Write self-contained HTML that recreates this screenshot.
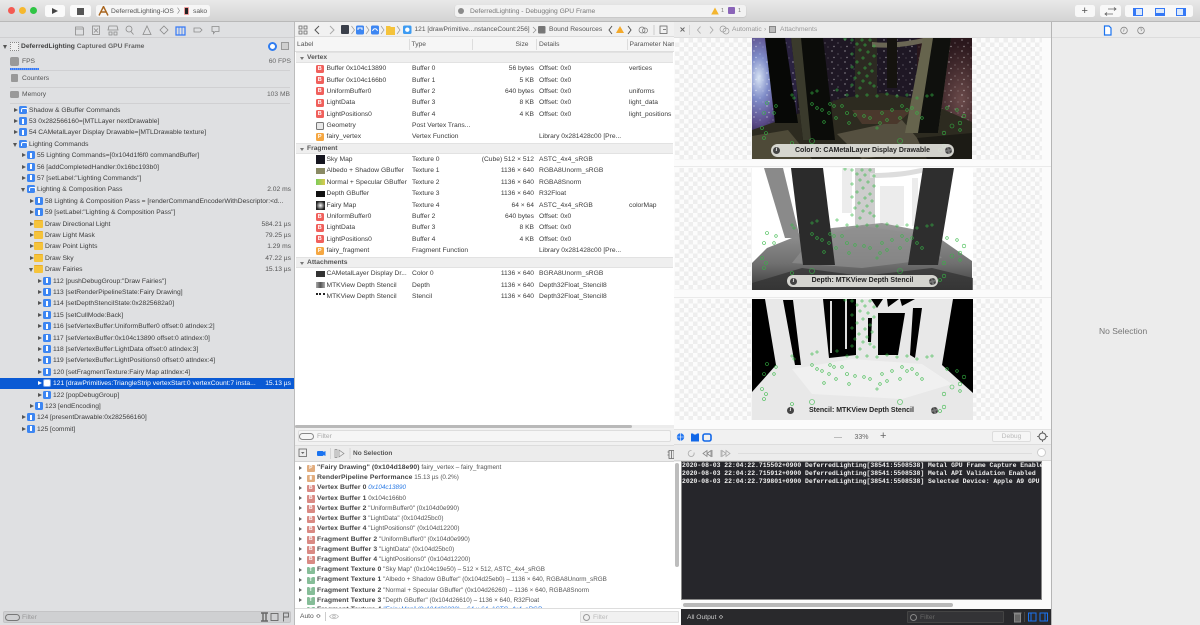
<!DOCTYPE html>
<html><head><meta charset="utf-8"><style>
*{box-sizing:border-box}
html,body{margin:0;padding:0;width:1200px;height:625px;overflow:hidden;background:#ececec}
#p{position:relative;width:1200px;height:625px;overflow:hidden;font:6.7px/11px "Liberation Sans",sans-serif;color:#3c3c3c;filter:blur(.35px)}
.x{position:absolute}
.t{position:absolute;white-space:nowrap;top:0}
.r{position:absolute;left:0;height:11px;width:294px}
.a{position:absolute;left:var(--x);top:3px;width:0;height:0;border-left:4px solid #555;border-top:2.5px solid transparent;border-bottom:2.5px solid transparent}
.a.o{border-top:4px solid #555;border-left:2.5px solid transparent;border-right:2.5px solid transparent;border-bottom:0;top:4px;left:calc(var(--x) - 1px)}
.ic{position:absolute;left:calc(var(--x) + 5px);top:1px;width:8px;height:8px;border-radius:1.5px;background:#3d86f2}
.ic:after{content:"";position:absolute;left:3.4px;top:1.5px;width:1.2px;height:5px;background:#fff}
.ic.p:after{left:1.5px;top:2px;width:5px;height:3px;border-radius:2px 2px 0 0;background:none;border:1px solid #fff;border-bottom:0}
.fo{position:absolute;left:calc(var(--x) + 4px);top:1px;width:9px;height:8px;background:#f5c33b;border-radius:1px;border-top:1.5px solid #e8ad2a}
.l{position:absolute;left:calc(var(--x) + 15px);top:0;white-space:nowrap}
.m{position:absolute;right:3px;top:0;white-space:nowrap;color:#555}
.sel{background:#0a5ad4;color:#fff}.sel .m{color:#fff}.sel .a{border-left-color:#fff}
.tr{position:absolute;left:296px;width:377px;height:11px}
.tr b{font-weight:normal;position:absolute;top:0;white-space:nowrap}
.c1{left:30.5px}.c2{left:116px}.c3{right:139px}.c4{left:243px}.c5{left:333px}
.bi{position:absolute;left:20px;top:1.5px;width:7.5px;height:8px;border-radius:1.5px;background:#f0605c;color:#fff;font:bold 5.5px/8px "Liberation Sans",sans-serif;text-align:center}
.bi.o{background:#f5a742}.bi.g{background:#e8e8e8;border:1px solid #777}
.th{position:absolute;left:20px;top:2.5px;width:9px;height:6px}
.sh{position:absolute;left:296px;width:377px;height:11px;background:#efefef;border-top:1px solid #e2e2e2;border-bottom:1px solid #e2e2e2;font-weight:bold;line-height:9.5px;color:#555}
.sh span{position:absolute;left:11px;top:0}
.sh i{position:absolute;left:4px;top:3.5px;border-top:3.5px solid #777;border-left:2.3px solid transparent;border-right:2.3px solid transparent}
.d{position:absolute;left:296px;height:10px;width:378px;line-height:10px;font-size:6.3px;color:#555;white-space:nowrap;margin-top:1px}
.d i{position:absolute;left:3px;top:2.5px;border-left:3.5px solid #666;border-top:2.3px solid transparent;border-bottom:2.3px solid transparent}
.d u{position:absolute;left:11px;top:1.5px;width:7.5px;height:7.5px;border-radius:1px;background:#d98a84;color:#fff;text-decoration:none;font:bold 5px/7.5px "Liberation Sans",sans-serif;text-align:center}
.d u.g{background:#86bd98}.d u.o{background:#e2ad7e}
.d span{position:absolute;left:21px;top:0}
.d b{font-size:6.8px;color:#444;letter-spacing:.1px}
.ck{position:absolute;left:675px;width:367px;background-color:#fcfcfc;background-image:conic-gradient(#eeeeee 25%,#fcfcfc 0 50%,#eeeeee 0 75%,#fcfcfc 0);background-size:9px 9px}
.pill{position:absolute;height:13px;border-radius:7px;background:rgba(226,226,220,.92);font:bold 7px/13px "Liberation Sans",sans-serif;color:#222;text-align:center;white-space:nowrap}
.pi{position:absolute;width:7px;height:7px;border-radius:50%;background:#444;color:#eee;font:italic bold 6px/7px "Liberation Serif",serif;text-align:center}
.pg{position:absolute;width:7px;height:7px;border-radius:50%;border:2px dotted #444;background:#777}
.con{position:absolute;left:682px;white-space:pre;font:bold 6.42px/8px "Liberation Mono",monospace;color:#eee}
svg{position:absolute;display:block;overflow:hidden}
</style></head><body><div id="p">

<!-- title bar -->
<div class="x" style="left:0;top:0;width:1200px;height:22px;background:linear-gradient(#e8e8e8,#d3d3d3);border-bottom:1px solid #b9b9b9"></div>
<div class="x" style="left:7.500px;top:7px;width:7px;height:7px;border-radius:50%;background:#f45a52"></div>
<div class="x" style="left:18.500px;top:7px;width:7px;height:7px;border-radius:50%;background:#f6b82e"></div>
<div class="x" style="left:30px;top:7px;width:7px;height:7px;border-radius:50%;background:#2fc544"></div>
<div class="x" style="left:45px;top:5px;width:20px;height:12px;border-radius:2.5px;background:#fafafa"></div>
<div class="x" style="left:52px;top:7.5px;border-left:6.5px solid #444;border-top:3.5px solid transparent;border-bottom:3.5px solid transparent"></div>
<div class="x" style="left:70px;top:5px;width:21px;height:12px;border-radius:2.5px;background:#fafafa"></div>
<div class="x" style="left:77px;top:7.5px;width:7px;height:7px;background:#555"></div>
<div class="x" style="left:96px;top:5px;width:114px;height:12px;border-radius:2.5px;background:#f6f6f6"></div>
<svg style="left:98px;top:6px" width="11" height="10" viewBox="0 0 11 10"><path d="M1 9.5 5.5.5 10 9.5M3 6h5" fill="none" stroke="#a8651e" stroke-width="1.4"/></svg>
<div class="t" style="left:111px;top:5.5px;color:#555;font-size:6.7px">DeferredLighting-iOS</div>
<div class="t" style="left:177px;top:5.5px;color:#666">〉</div>
<div class="x" style="left:184px;top:7px;width:5px;height:8px;background:#222;border:1px solid #e99;border-radius:1px"></div>
<div class="t" style="left:193px;top:5.5px;color:#555">sako</div>
<div class="x" style="left:455px;top:5px;width:291px;height:12px;border-radius:2.5px;background:#f2f2f2;box-shadow:0 .5px 1px #bbb"></div>
<div class="x" style="left:458px;top:8px;width:6px;height:6px;border-radius:50%;background:#8a8a8a"></div>
<div class="t" style="left:470px;top:5.5px;color:#777">DeferredLighting - Debugging GPU Frame</div>
<svg style="left:711px;top:7px" width="8" height="8" viewBox="0 0 8 8"><path d="M4 .5 7.8 7.5H.2z" fill="#f3b52f"/></svg>
<div class="t" style="left:721px;top:5.5px;font-size:5.5px;color:#777">1</div>
<div class="x" style="left:728px;top:7px;width:7px;height:7px;background:#8a64b8;border-radius:1px"></div>
<div class="t" style="left:738px;top:5.5px;font-size:5.5px;color:#777">1</div>
<div class="x" style="left:1075px;top:5px;width:20px;height:12px;border-radius:2.5px;background:#f8f8f8"></div>
<div class="t" style="left:1081.5px;top:5.5px;font-size:11px;color:#555">+</div>
<div class="x" style="left:1100px;top:5px;width:21px;height:12px;border-radius:2.5px;background:#f8f8f8"></div>
<svg style="left:1104px;top:6.5px" width="13" height="9" viewBox="0 0 13 9"><path d="M4 2h8M10 .5 12 2 10 3.5M9 7H1M3 5.5 1 7l2 1.500" fill="none" stroke="#666" stroke-width=".8"/></svg>
<div class="x" style="left:1125px;top:5px;width:68px;height:12px;border-radius:2.5px;background:#f8f8f8"></div>
<div class="x" style="left:1133px;top:7.500px;width:10px;height:8px;border:1px solid #3478f6;border-left-width:3px;background:#dce9fb"></div>
<div class="x" style="left:1155px;top:7.500px;width:10px;height:8px;border:1px solid #3478f6;border-bottom-width:3px;background:#dce9fb"></div>
<div class="x" style="left:1176px;top:7.500px;width:10px;height:8px;border:1px solid #3478f6;border-right-width:3px;background:#dce9fb"></div>

<!-- left panel -->
<div class="x" style="left:0;top:22px;width:294px;height:603px;background:#dfe0e2"></div>
<div class="x" style="left:0;top:37px;width:294px;height:1px;background:#cfcfd1"></div>
<div class="x" style="left:294px;top:22px;width:1px;height:603px;background:#bcbcbc"></div>
<svg style="left:72px;top:24px" width="150" height="12" viewBox="0 0 150 12" fill="none" stroke="#8a8a8a" stroke-width=".8">
<path d="M3.500 3h7l1 1h0v7h-8zM3.500 5h8"/><rect x="20.500" y="2" width="7" height="8.500"/><path d="M22 4.500l4 4M26 4.500l-4 4"/>
<path d="M37 2h8l1 4h-10zM37 8h3v3h-3zM42 8h3v3h-3z"/><circle cx="57" cy="5" r="3"/><path d="M59 7.500l2.500 3"/>
<path d="M75 2l4 8.500h-8z"/><path d="M92 2l4 4-4 4-4-4z"/><path d="M104 3h9v8h-9z" stroke="#3478f6" stroke-width="1.200"/><path d="M107 3v8M110 3v8" stroke="#3478f6"/>
<path d="M122 4h6l2 2-2 2h-6z"/><path d="M140 2.500h7v5h-4l-1.500 2v-2h-1.500z"/></svg>

<div class="x" style="left:3px;top:44.500px;border-top:4px solid #555;border-left:2.500px solid transparent;border-right:2.500px solid transparent"></div>
<div class="x" style="left:10px;top:42px;width:9px;height:9px;background:#eee;border:1px dotted #888"></div>
<div class="t" style="left:21px;top:41px;font-weight:bold;color:#444">DeferredLighting <span style="color:#666">Captured GPU Frame</span></div>
<div class="x" style="left:268px;top:42px;width:9px;height:9px;border-radius:50%;background:#fff;border:2px solid #2f7cf0"></div>
<div class="x" style="left:281px;top:42px;width:8px;height:8px;background:#cfcfcf;border:1px solid #999"></div>
<div class="x" style="left:10px;top:57px;width:9px;height:9px;background:#999;border-radius:2px"></div>
<div class="t" style="left:22px;top:56px;color:#555">FPS</div><div class="t" style="right:909px;top:56px;color:#666">60 FPS</div>
<div class="x" style="left:10px;top:67.500px;width:29px;height:3px;background:repeating-linear-gradient(90deg,#3478f6 0 1.500px,#8db5f5 1.500px 2px)"></div>
<div class="x" style="left:10px;top:70px;width:280px;height:1px;background:#d0d0d2"></div>
<div class="x" style="left:11px;top:74px;width:7px;height:8px;background:#999;border-radius:1px"></div>
<div class="t" style="left:22px;top:72.500px;color:#555">Counters</div>
<div class="x" style="left:10px;top:87px;width:280px;height:1px;background:#d0d0d2"></div>
<div class="x" style="left:10px;top:91px;width:9px;height:7px;background:#999;border-radius:1.500px"></div>
<div class="t" style="left:22px;top:89px;color:#555">Memory</div><div class="t" style="right:910px;top:89px;color:#666">103 MB</div>
<div class="x" style="left:10px;top:103px;width:280px;height:1px;background:#d0d0d2"></div>

<div class="r" style="top:104.500px;--x:14px"><i class="a"></i><i class="ic p"></i><span class="l">Shadow &amp; GBuffer Commands</span></div>
<div class="r" style="top:116px;--x:14px"><i class="a"></i><i class="ic"></i><span class="l">53 0x282566160=[MTLLayer nextDrawable]</span></div>
<div class="r" style="top:127.300px;--x:14px"><i class="a"></i><i class="ic"></i><span class="l">54 CAMetalLayer Display Drawable=[MTLDrawable texture]</span></div>
<div class="r" style="top:138.700px;--x:14px"><i class="a o"></i><i class="ic p"></i><span class="l">Lighting Commands</span></div>
<div class="r" style="top:150.100px;--x:22px"><i class="a"></i><i class="ic"></i><span class="l">55 Lighting Commands=[0x104d1f6f0 commandBuffer]</span></div>
<div class="r" style="top:161.500px;--x:22px"><i class="a"></i><i class="ic"></i><span class="l">56 [addCompletedHandler:0x16bc193b0]</span></div>
<div class="r" style="top:172.900px;--x:22px"><i class="a"></i><i class="ic"></i><span class="l">57 [setLabel:"Lighting Commands"]</span></div>
<div class="r" style="top:184.300px;--x:22px"><i class="a o"></i><i class="ic p"></i><span class="l">Lighting &amp; Composition Pass</span><span class="m">2.02 ms</span></div>
<div class="r" style="top:195.700px;--x:30px"><i class="a"></i><i class="ic"></i><span class="l">58 Lighting &amp; Composition Pass = [renderCommandEncoderWithDescriptor:&lt;d...</span></div>
<div class="r" style="top:207.100px;--x:30px"><i class="a"></i><i class="ic"></i><span class="l">59 [setLabel:"Lighting &amp; Composition Pass"]</span></div>
<div class="r" style="top:218.500px;--x:30px"><i class="a"></i><i class="fo"></i><span class="l">Draw Directional Light</span><span class="m">584.21 µs</span></div>
<div class="r" style="top:229.900px;--x:30px"><i class="a"></i><i class="fo"></i><span class="l">Draw Light Mask</span><span class="m">79.25 µs</span></div>
<div class="r" style="top:241.300px;--x:30px"><i class="a"></i><i class="fo"></i><span class="l">Draw Point Lights</span><span class="m">1.29 ms</span></div>
<div class="r" style="top:252.700px;--x:30px"><i class="a"></i><i class="fo"></i><span class="l">Draw Sky</span><span class="m">47.22 µs</span></div>
<div class="r" style="top:264.100px;--x:30px"><i class="a o"></i><i class="fo"></i><span class="l">Draw Fairies</span><span class="m">15.13 µs</span></div>
<div class="r" style="top:275.500px;--x:38px"><i class="a"></i><i class="ic"></i><span class="l">112 [pushDebugGroup:"Draw Fairies"]</span></div>
<div class="r" style="top:286.900px;--x:38px"><i class="a"></i><i class="ic"></i><span class="l">113 [setRenderPipelineState:Fairy Drawing]</span></div>
<div class="r" style="top:298.300px;--x:38px"><i class="a"></i><i class="ic"></i><span class="l">114 [setDepthStencilState:0x2825682a0]</span></div>
<div class="r" style="top:309.700px;--x:38px"><i class="a"></i><i class="ic"></i><span class="l">115 [setCullMode:Back]</span></div>
<div class="r" style="top:321.100px;--x:38px"><i class="a"></i><i class="ic"></i><span class="l">116 [setVertexBuffer:UniformBuffer0 offset:0 atIndex:2]</span></div>
<div class="r" style="top:332.500px;--x:38px"><i class="a"></i><i class="ic"></i><span class="l">117 [setVertexBuffer:0x104c13890 offset:0 atIndex:0]</span></div>
<div class="r" style="top:343.900px;--x:38px"><i class="a"></i><i class="ic"></i><span class="l">118 [setVertexBuffer:LightData offset:0 atIndex:3]</span></div>
<div class="r" style="top:355.300px;--x:38px"><i class="a"></i><i class="ic"></i><span class="l">119 [setVertexBuffer:LightPositions0 offset:0 atIndex:4]</span></div>
<div class="r" style="top:366.700px;--x:38px"><i class="a"></i><i class="ic"></i><span class="l">120 [setFragmentTexture:Fairy Map atIndex:4]</span></div>
<div class="r sel" style="top:377.700px;--x:38px;height:11px"><i class="a"></i><i class="ic" style="background:#fff;border:1px solid #7ea9ee;border-radius:2px"></i><span class="l">121 [drawPrimitives:TriangleStrip vertexStart:0 vertexCount:7 insta...</span><span class="m">15.13 µs</span></div>
<div class="r" style="top:389.500px;--x:38px"><i class="a"></i><i class="ic"></i><span class="l">122 [popDebugGroup]</span></div>
<div class="r" style="top:400.900px;--x:30px"><i class="a"></i><i class="ic"></i><span class="l">123 [endEncoding]</span></div>
<div class="r" style="top:412.300px;--x:22px"><i class="a"></i><i class="ic"></i><span class="l">124 [presentDrawable:0x282566160]</span></div>
<div class="r" style="top:423.700px;--x:22px"><i class="a"></i><i class="ic"></i><span class="l">125 [commit]</span></div>

<div class="x" style="left:3px;top:611px;width:288px;height:12px;background:#cfd0d2;border:1px solid #c4c4c6;border-radius:2px"></div>
<div class="x" style="left:5px;top:613.500px;width:15px;height:7px;border-radius:4px;border:1px solid #777"></div>
<div class="t" style="left:22px;top:611.500px;color:#999">Filter</div>
<svg style="left:260px;top:612px" width="29" height="10" viewBox="0 0 29 10" fill="none" stroke="#666" stroke-width=".9"><path d="M1 1h7M1 9h7M3 1v8M6 1v8" stroke-width="1.400"/><rect x="11" y="1.500" width="7" height="7"/><path d="M23.500 9.500V1h5v4h-5"/></svg>

<!-- center -->
<div class="x" style="left:295px;top:22px;width:379px;height:15px;background:#f1f1f1;border-bottom:1px solid #dcdcdc"></div>
<svg style="left:297px;top:23px" width="376" height="13" viewBox="0 0 376 13" fill="none">
<path d="M2 3h3v3h-3zM7 3h3v3h-3zM2 8h3v3h-3zM7 8h3v3h-3z" stroke="#666" stroke-width=".8"/>
<path d="M22 3 18 7l4 4" stroke="#555"/><path d="M33 3l4 4-4 4" stroke="#aaa"/>
<rect x="44" y="2" width="8" height="9" fill="#3a3f4a" rx="1"/><path d="M54.500 3l3 4-3 4" stroke="#999" stroke-width=".7"/>
<rect x="59" y="2.500" width="8" height="9" rx="1.500" fill="#3d86f2"/><path d="M61 7V5h4v2" stroke="#fff"/><path d="M69 3l3 4-3 4" stroke="#999" stroke-width=".7"/>
<rect x="74" y="2.500" width="8" height="9" rx="1.500" fill="#3d86f2"/><path d="M75.500 8c1-3 4-3 5 0" stroke="#fff"/><path d="M84 3l3 4-3 4" stroke="#999" stroke-width=".7"/>
<path d="M89 3h4l1 1h4v8h-9z" fill="#f5c33b"/><path d="M100 3l3 4-3 4" stroke="#999" stroke-width=".7"/>
<rect x="106" y="2.500" width="8.500" height="8.500" rx="1.500" fill="#3d9bf2"/><circle cx="110.300" cy="6.700" r="2.200" fill="#fff"/>
<path d="M236 4l3 3-3 3" stroke="#888" stroke-width=".7"/>
<rect x="241" y="3" width="7.500" height="7.500" fill="#777" rx="1"/>
<path d="M315 3l-3 4 3 4" stroke="#555"/><path d="M323 3 327 10H319z" fill="#f3a92b"/><path d="M331 3l3 4-3 4" stroke="#555"/>
<circle cx="345" cy="7" r="3" stroke="#777" stroke-width=".7"/><circle cx="348" cy="7.500" r="2.500" stroke="#777" stroke-width=".7"/>
<path d="M357 2v10" stroke="#ccc"/><rect x="363" y="3" width="7" height="7.500" stroke="#666" stroke-width=".8"/><path d="M366 6.500h3" stroke="#666" stroke-width=".8"/>
</svg>
<div class="t" style="left:414.500px;top:24px;color:#555;font-size:6.6px">121 [drawPrimitive...nstanceCount:256]</div>
<div class="t" style="left:549px;top:24px;color:#555;font-size:6.7px">Bound Resources</div>

<div class="x" style="left:295px;top:37px;width:379px;height:15px;background:#f6f6f6;border-bottom:1px solid #ddd"></div>
<div class="t" style="left:297px;top:39px;color:#555">Label</div>
<div class="t" style="left:411.500px;top:39px;color:#555">Type</div>
<div class="t" style="left:515.500px;top:39px;color:#555">Size</div>
<div class="t" style="left:539px;top:39px;color:#555">Details</div>
<div class="t" style="left:629.500px;top:39px;color:#555;width:44px;overflow:hidden">Parameter Name</div>
<div class="x" style="left:409px;top:39px;width:1px;height:11px;background:#ddd"></div>
<div class="x" style="left:472px;top:39px;width:1px;height:11px;background:#ddd"></div>
<div class="x" style="left:536px;top:39px;width:1px;height:11px;background:#ddd"></div>
<div class="x" style="left:627px;top:39px;width:1px;height:11px;background:#ddd"></div>

<div class="x" style="left:295px;top:52px;width:379px;height:373px;background:#fff"></div>
<div class="sh" style="top:52px"><i></i><span>Vertex</span></div>
<div class="tr" style="top:63px"><i class="bi">B</i><b class="c1">Buffer 0x104c13890</b><b class="c2">Buffer 0</b><b class="c3">56 bytes</b><b class="c4">Offset: 0x0</b><b class="c5">vertices</b></div>
<div class="tr" style="top:74.500px"><i class="bi">B</i><b class="c1">Buffer 0x104c166b0</b><b class="c2">Buffer 1</b><b class="c3">5 KB</b><b class="c4">Offset: 0x0</b></div>
<div class="tr" style="top:85.700px"><i class="bi">B</i><b class="c1">UniformBuffer0</b><b class="c2">Buffer 2</b><b class="c3">640 bytes</b><b class="c4">Offset: 0x0</b><b class="c5">uniforms</b></div>
<div class="tr" style="top:97px"><i class="bi">B</i><b class="c1">LightData</b><b class="c2">Buffer 3</b><b class="c3">8 KB</b><b class="c4">Offset: 0x0</b><b class="c5">light_data</b></div>
<div class="tr" style="top:108.500px"><i class="bi">B</i><b class="c1">LightPositions0</b><b class="c2">Buffer 4</b><b class="c3">4 KB</b><b class="c4">Offset: 0x0</b><b class="c5">light_positions</b></div>
<div class="tr" style="top:120px"><i class="bi g"></i><b class="c1">Geometry</b><b class="c2">Post Vertex Trans...</b></div>
<div class="tr" style="top:131.200px"><i class="bi o">P</i><b class="c1">fairy_vertex</b><b class="c2">Vertex Function</b><b class="c4">Library 0x281428c00 [Pre...</b></div>
<div class="sh" style="top:143px"><i></i><span>Fragment</span></div>
<div class="tr" style="top:154px"><i class="th" style="background:#15151f;height:9px;top:1px"></i><b class="c1">Sky Map</b><b class="c2">Texture 0</b><b class="c3">(Cube) 512 × 512</b><b class="c4">ASTC_4x4_sRGB</b></div>
<div class="tr" style="top:165.400px"><i class="th" style="background:#8a8a64"></i><b class="c1">Albedo + Shadow GBuffer</b><b class="c2">Texture 1</b><b class="c3">1136 × 640</b><b class="c4">RGBA8Unorm_sRGB</b></div>
<div class="tr" style="top:176.800px"><i class="th" style="background:linear-gradient(90deg,#7dcc5a,#d9c94f)"></i><b class="c1">Normal + Specular GBuffer</b><b class="c2">Texture 2</b><b class="c3">1136 × 640</b><b class="c4">RGBA8Snorm</b></div>
<div class="tr" style="top:188.200px"><i class="th" style="background:#111"></i><b class="c1">Depth GBuffer</b><b class="c2">Texture 3</b><b class="c3">1136 × 640</b><b class="c4">R32Float</b></div>
<div class="tr" style="top:199.600px"><i class="th" style="background:radial-gradient(#fff,#222 70%);height:9px;top:1px"></i><b class="c1">Fairy Map</b><b class="c2">Texture 4</b><b class="c3">64 × 64</b><b class="c4">ASTC_4x4_sRGB</b><b class="c5">colorMap</b></div>
<div class="tr" style="top:211px"><i class="bi">B</i><b class="c1">UniformBuffer0</b><b class="c2">Buffer 2</b><b class="c3">640 bytes</b><b class="c4">Offset: 0x0</b></div>
<div class="tr" style="top:222.400px"><i class="bi">B</i><b class="c1">LightData</b><b class="c2">Buffer 3</b><b class="c3">8 KB</b><b class="c4">Offset: 0x0</b></div>
<div class="tr" style="top:233.700px"><i class="bi">B</i><b class="c1">LightPositions0</b><b class="c2">Buffer 4</b><b class="c3">4 KB</b><b class="c4">Offset: 0x0</b></div>
<div class="tr" style="top:245px"><i class="bi o">P</i><b class="c1">fairy_fragment</b><b class="c2">Fragment Function</b><b class="c4">Library 0x281428c00 [Pre...</b></div>
<div class="sh" style="top:257px"><i></i><span>Attachments</span></div>
<div class="tr" style="top:268px"><i class="th" style="background:#333"></i><b class="c1">CAMetalLayer Display Dr...</b><b class="c2">Color 0</b><b class="c3">1136 × 640</b><b class="c4">BGRA8Unorm_sRGB</b></div>
<div class="tr" style="top:279.500px"><i class="th" style="background:linear-gradient(90deg,#aaa,#555,#aaa)"></i><b class="c1">MTKView Depth Stencil</b><b class="c2">Depth</b><b class="c3">1136 × 640</b><b class="c4">Depth32Float_Stencil8</b></div>
<div class="tr" style="top:290.800px"><i class="th" style="background:#fff;border-top:2px dotted #222"></i><b class="c1">MTKView Depth Stencil</b><b class="c2">Stencil</b><b class="c3">1136 × 640</b><b class="c4">Depth32Float_Stencil8</b></div>
<div class="x" style="left:295px;top:425px;width:337px;height:3px;background:#b9b9b9;border-radius:1.500px"></div>
<div class="x" style="left:295px;top:428px;width:379px;height:17px;background:#f1f1f1"></div>
<div class="x" style="left:298px;top:430px;width:373px;height:12px;background:#f6f6f6;border:1px solid #ddd;border-radius:2px"></div>
<div class="x" style="left:299px;top:432.500px;width:15px;height:7px;border-radius:4px;border:1px solid #888"></div>
<div class="t" style="left:317px;top:431px;color:#aaa">Filter</div>

<div class="x" style="left:295px;top:445px;width:379px;height:17px;background:#ececec;border-top:1px solid #ddd;border-bottom:1px solid #d4d4d4"></div>
<svg style="left:298px;top:447px" width="80" height="13" viewBox="0 0 80 13" fill="none"><rect x="1" y="2" width="7.500" height="7.500" stroke="#666" stroke-width=".8"/><path d="M3 5h3.500L4.700 7z" fill="#666"/><rect x="19" y="4" width="6.500" height="5" rx="1" fill="#1a73f0"/><path d="M25.500 5l2-1v5l-2-1z" fill="#1a73f0"/><path d="M32.500 1v11M52 1v11" stroke="#ccc" stroke-width=".7"/><path d="M37 2.500h2v8h-2zM41 3l5 3.500-5 3.500z" stroke="#888" stroke-width=".7"/></svg>
<div class="t" style="left:353px;top:448px;color:#555;font-weight:bold;font-size:6.5px">No Selection</div>
<svg style="left:667px;top:447.500px" width="9" height="12" viewBox="0 0 9 12" fill="none" stroke="#666" stroke-width=".8"><path d="M2 2.500h5v8h-5zM.5 4h1.500M7 4h1.500M.5 7h1.500M7 7h1.500M4.500 2.500v8"/></svg>

<div class="x" style="left:295px;top:462px;width:386px;height:146px;background:#fff;overflow:hidden"></div>
<div class="d" style="top:462px"><i></i><u class="o">P</u><span><b>"Fairy Drawing" (0x104d18e90)</b> fairy_vertex – fairy_fragment</span></div>
<div class="d" style="top:472.200px"><i></i><u class="o">▮</u><span><b>RenderPipeline Performance</b> 15.13 µs (0.2%)</span></div>
<div class="d" style="top:482.400px"><i></i><u>B</u><span><b>Vertex Buffer 0</b> <em style="color:#2c7be5">0x104c13890</em></span></div>
<div class="d" style="top:492.600px"><i></i><u>B</u><span><b>Vertex Buffer 1</b> 0x104c166b0</span></div>
<div class="d" style="top:502.900px"><i></i><u>B</u><span><b>Vertex Buffer 2</b> "UniformBuffer0" (0x104d0e990)</span></div>
<div class="d" style="top:513.100px"><i></i><u>B</u><span><b>Vertex Buffer 3</b> "LightData" (0x104d25bc0)</span></div>
<div class="d" style="top:523.300px"><i></i><u>B</u><span><b>Vertex Buffer 4</b> "LightPositions0" (0x104d12200)</span></div>
<div class="d" style="top:533.500px"><i></i><u>B</u><span><b>Fragment Buffer 2</b> "UniformBuffer0" (0x104d0e990)</span></div>
<div class="d" style="top:543.700px"><i></i><u>B</u><span><b>Fragment Buffer 3</b> "LightData" (0x104d25bc0)</span></div>
<div class="d" style="top:553.900px"><i></i><u>B</u><span><b>Fragment Buffer 4</b> "LightPositions0" (0x104d12200)</span></div>
<div class="d" style="top:564.200px"><i></i><u class="g">T</u><span><b>Fragment Texture 0</b> "Sky Map" (0x104c19e50) – 512 × 512, ASTC_4x4_sRGB</span></div>
<div class="d" style="top:574.400px"><i></i><u class="g">T</u><span><b>Fragment Texture 1</b> "Albedo + Shadow GBuffer" (0x104d25eb0) – 1136 × 640, RGBA8Unorm_sRGB</span></div>
<div class="d" style="top:584.600px"><i></i><u class="g">T</u><span><b>Fragment Texture 2</b> "Normal + Specular GBuffer" (0x104d26260) – 1136 × 640, RGBA8Snorm</span></div>
<div class="d" style="top:594.800px"><i></i><u class="g">T</u><span><b>Fragment Texture 3</b> "Depth GBuffer" (0x104d26610) – 1136 × 640, R32Float</span></div>
<div class="d" style="top:604px"><i></i><u class="g">T</u><span><b>Fragment Texture 4</b> <em style="color:#2c7be5">"Fairy Map" (0x104d26830) – 64 × 64, ASTC_4x4_sRGB</em></span></div>
<div class="x" style="left:675px;top:463px;width:4px;height:104px;background:#bdbdbd;border-radius:2px"></div>
<div class="x" style="left:295px;top:608px;width:386px;height:17px;background:#fff;border-top:1px solid #ddd"></div>
<div class="t" style="left:300px;top:611px;color:#555">Auto ≎</div>
<div class="x" style="left:325px;top:612px;width:1px;height:9px;background:#ccc"></div>
<svg style="left:329px;top:613px" width="10" height="7" viewBox="0 0 10 7" fill="none" stroke="#bbb" stroke-width=".8"><path d="M.5 3.500C3 .5 7 .5 9.500 3.500 7 6.500 3 6.500.5 3.500z"/><circle cx="5" cy="3.500" r="1.300"/></svg>
<div class="x" style="left:580px;top:611px;width:99px;height:12px;background:#f1f1f1;border:1px solid #ddd;border-radius:1px"></div>
<div class="x" style="left:583px;top:613.500px;width:7px;height:7px;border:1px solid #999;border-radius:50%"></div>
<div class="t" style="left:593px;top:611.500px;color:#bbb">Filter</div>

<!-- attachments -->
<div class="x" style="left:674px;top:22px;width:378px;height:16px;background:#ececec;border-bottom:1px solid #dedede"></div>
<svg style="left:680px;top:24px" width="90" height="12" viewBox="0 0 90 12" fill="none"><path d="M.500 3.500l4 4M4.500 3.500l-4 4" stroke="#666" stroke-width=".9"/><path d="M9.500 1v10" stroke="#ccc" stroke-width=".7"/><path d="M20.500 2.500l-3 3.500 3 3.500M30 2.500l3 3.500-3 3.500" stroke="#aaa" stroke-width=".9"/><circle cx="43" cy="5" r="3" stroke="#999" stroke-width=".7"/><circle cx="46" cy="7" r="3" stroke="#999" stroke-width=".7"/></svg>
<div class="t" style="left:732px;top:24px;color:#999">Automatic</div>
<div class="t" style="left:764px;top:24px;color:#999">›</div>
<div class="x" style="left:769px;top:26px;width:7px;height:7px;border:1px solid #888;background:#bbb"></div>
<div class="t" style="left:780px;top:24px;color:#999">Attachments</div>

<div class="x" style="left:674px;top:38px;width:378px;height:392px;background:#fbfbfb"></div>
<div class="ck" style="top:38px;height:122px"></div>
<div class="ck" style="top:168px;height:122px"></div>
<div class="ck" style="top:299px;height:121px"></div>
<div class="x" style="left:674px;top:166px;width:377px;height:1px;background:#eaeaea"></div>
<div class="x" style="left:674px;top:297px;width:377px;height:1px;background:#eaeaea"></div>

<svg width="0" height="0" style="position:absolute"><defs><g id="dots" fill="none" stroke="#35b845" stroke-width=".55">
<circle cx="93" cy="1" r="1.100"/><circle cx="100" cy="2" r="1.100"/><circle cx="110" cy="2" r="1.100"/><circle cx="118" cy="2" r="1.100"/><circle cx="105" cy="6" r="1.100"/><circle cx="113" cy="7" r="1.100"/><circle cx="122" cy="8" r="1.100"/><circle cx="108" cy="12" r="1.100"/><circle cx="116" cy="14" r="1.100"/><circle cx="100" cy="16" r="1.100"/><circle cx="122" cy="18" r="1.100"/><circle cx="111" cy="20" r="1.100"/><circle cx="105" cy="24" r="1.100"/><circle cx="118" cy="26" r="1.100"/><circle cx="100" cy="29" r="1.100"/><circle cx="113" cy="30" r="1.100"/><circle cx="120" cy="33" r="1.100"/><circle cx="107" cy="35" r="1.100"/><circle cx="115" cy="38" r="1.100"/><circle cx="103" cy="40" r="1.100"/><circle cx="111" cy="43" r="1.100"/><circle cx="118" cy="45" r="1.100"/><circle cx="122" cy="48" r="1.100"/><circle cx="108" cy="50" r="1.100"/><circle cx="100" cy="47" r="1.100"/>
<circle cx="85" cy="52" r="1.100"/><circle cx="95" cy="57" r="1.100"/><circle cx="105" cy="58" r="1.100"/><circle cx="115" cy="57" r="1.100"/><circle cx="125" cy="58" r="1.100"/><circle cx="135" cy="56" r="1.100"/><circle cx="145" cy="58" r="1.100"/><circle cx="155" cy="57" r="1.100"/><circle cx="165" cy="60" r="1.100"/><circle cx="175" cy="58" r="1.100"/><circle cx="180" cy="57" r="1.100"/><circle cx="60" cy="55" r="1.100"/><circle cx="65" cy="53" r="1.100"/><circle cx="40" cy="57" r="1.100"/><circle cx="42" cy="60" r="1.100"/>
<circle cx="60" cy="66" r="1.300"/><circle cx="65" cy="70" r="1.300"/><circle cx="70" cy="72" r="1.300"/><circle cx="78" cy="66" r="1.300"/><circle cx="82" cy="68" r="1.300"/><circle cx="90" cy="68" r="1.300"/><circle cx="77" cy="75" r="1.300"/><circle cx="84" cy="80" r="1.300"/><circle cx="95" cy="75" r="1.500"/><circle cx="103" cy="77" r="1.300"/><circle cx="112" cy="78" r="1.300"/><circle cx="118" cy="80" r="1.300"/><circle cx="130" cy="75" r="1.300"/><circle cx="140" cy="72" r="1.300"/><circle cx="150" cy="68" r="1.300"/><circle cx="155" cy="72" r="1.300"/><circle cx="160" cy="70" r="1.300"/><circle cx="165" cy="75" r="1.300"/><circle cx="170" cy="80" r="1.300"/><circle cx="148" cy="80" r="1.300"/><circle cx="135" cy="82" r="1.300"/><circle cx="128" cy="85" r="1.300"/><circle cx="72" cy="84" r="1.300"/><circle cx="97" cy="85" r="1.300"/><circle cx="125" cy="90" r="1.100"/>
<circle cx="15" cy="65" r="1.500"/><circle cx="24" cy="68" r="1.300"/><circle cx="22" cy="75" r="1.300"/><circle cx="12" cy="75" r="1.500"/><circle cx="10" cy="90" r="1.500"/><circle cx="14" cy="95" r="1.500"/><circle cx="12" cy="100" r="1.500"/><circle cx="195" cy="70" r="1.300"/><circle cx="205" cy="72" r="1.300"/><circle cx="212" cy="78" r="1.800"/><circle cx="208" cy="85" r="1.800"/><circle cx="200" cy="88" r="2"/><circle cx="192" cy="95" r="1.800"/><circle cx="208" cy="92" r="1.300"/><circle cx="40" cy="105" r="1.500"/><circle cx="60" cy="103" r="2.500"/><circle cx="148" cy="103" r="2.500"/><circle cx="192" cy="108" r="1.800"/><circle cx="188" cy="112" r="1.500"/></g>
<radialGradient id="neb" cx=".15" cy=".42" r=".65"><stop offset="0" stop-color="#d8e4f5"/><stop offset=".35" stop-color="#7f8cc8"/><stop offset=".75" stop-color="#5a4a88"/><stop offset="1" stop-color="#2a2240"/></radialGradient>
<radialGradient id="red" cx=".8" cy=".65" r=".6"><stop offset="0" stop-color="#6a4a4a"/><stop offset="1" stop-color="#2a171c"/></radialGradient>
<linearGradient id="fl2" x1="0" y1="0" x2="0" y2="1"><stop offset="0" stop-color="#9a9a9a"/><stop offset=".6" stop-color="#707070"/><stop offset="1" stop-color="#3c3c3c"/></linearGradient>
<pattern id="st" width="13" height="11" patternUnits="userSpaceOnUse"><circle cx="2" cy="2" r=".6" fill="#fff" opacity=".75"/><circle cx="8" cy="5" r=".5" fill="#fff" opacity=".6"/><circle cx="4" cy="8.500" r=".7" fill="#fff" opacity=".5"/><circle cx="11" cy="9" r=".4" fill="#fff" opacity=".7"/></pattern>
</defs></svg>

<svg style="left:752px;top:38px" width="220" height="121" viewBox="0 0 220 121">
<rect width="220" height="121" fill="#1e1724"/><rect width="45" height="95" fill="url(#neb)"/><path d="M165 0h55v95h-55z" fill="url(#red)"/><rect width="220" height="85" fill="url(#st)"/>
<path d="M103 0h22v58h-22z" fill="#2c2a22"/><path d="M120 4c20 2 40-1 60-6v5c-20 5-40 8-60 6z" fill="#6a6654"/><path d="M135 0h10v50h-10z" fill="#15130f"/>
<path d="M0 92 40 78 90 60 130 55 170 62 220 84V121H0z" fill="#2d2b20"/><path d="M0 98 36 92 60 121H0z" fill="#4e4a38"/><path d="M85 96 150 82 175 112 110 121z" fill="#555040"/><path d="M100 72h60l-15 14h-35z" fill="#4a382c"/><path d="M165 100 220 95V121H175z" fill="#1c1b15"/>
<path d="M13 0H33L46 85 23 85z" fill="#070806"/><path d="M39 0H71L83 102 51 102z" fill="#0b0c09"/><path d="M39 0H49L59 102 51 102z" fill="#3a3a2c"/>
<path d="M171 0H199L186 95 153 95z" fill="#66644d"/><path d="M181 0H199L186 95 166 95z" fill="#0f100d"/>
<use href="#dots"/></svg>
<div class="pill" style="left:771px;top:144px;width:183px">Color 0: CAMetalLayer Display Drawable</div>
<div class="pi" style="left:773px;top:147px">i</div><div class="pg" style="left:945px;top:147px"></div>

<svg style="left:752px;top:168px" width="221" height="122" viewBox="0 0 221 122">
<rect width="221" height="122" fill="#fff"/>
<path d="M90 0h10v45h-10zM128 18h24v40h-24zM160 10h6v48h-6z" fill="#ececec"/><path d="M103 0h20v57h-20z" fill="#cdcdcd"/>
<path d="M118 5c20 0 40-2 55-6v5c-20 5-35 6-55 6z" fill="#ddd"/>
<path d="M12 0H31L48 70H33z" fill="#8a8a8a"/>
<path d="M0 95 15 80 40 70 80 60 130 55 180 65 220 93V122H0z" fill="url(#fl2)"/><path d="M60 70 110 58 165 66 190 90 110 100 40 95z" fill="#8f8f8f" opacity=".7"/><path d="M0 115 50 100 110 108 180 100 221 110V122H0z" fill="#333" opacity=".75"/>
<path d="M39 0H71L83 97 51 97z" fill="#2b2b2b"/><path d="M171 0H202L186 97 156 97z" fill="#2e2e2e"/>
<use href="#dots"/></svg>
<div class="pill" style="left:787px;top:275px;width:151px;height:12px;line-height:12px">Depth: MTKView Depth Stencil</div>
<div class="pi" style="left:790px;top:277.500px">i</div><div class="pg" style="left:929px;top:277.500px"></div>

<svg style="left:752px;top:299px" width="221" height="121" viewBox="0 0 221 121">
<rect width="221" height="121" fill="#e8e8e8"/>
<path d="M0 0H13L24 66 0 93zM201 0H221V94L190 66zM71 0H104V56L77 59zM31 1H41L49 66 43 66zM126 14H153L146 56H126zM161 9H170L163 59 158 56zM116 19H120L119 43H116zM119 0H131L125 9zM135 0H147L136 8zM148 0H163L150 7z" fill="#000"/>
<path d="M40 70 100 60 170 65 200 85 150 100 60 95z" fill="#f0f0f0"/>
<path d="M93 0h2v50h-2zM78 2h2v52h-2z" fill="#ddd"/>
<use href="#dots"/></svg>
<div class="t" style="left:809px;top:405px;font:bold 7px/11px 'Liberation Sans',sans-serif;color:#222">Stencil: MTKView Depth Stencil</div>
<div class="pi" style="left:787px;top:407px">i</div><div class="pg" style="left:931px;top:407px"></div>

<!-- debug bar -->
<div class="x" style="left:674px;top:429px;width:378px;height:16px;background:#f1f1f1;border-top:1px solid #e2e2e2;border-bottom:1px solid #ddd"></div>
<svg style="left:676px;top:431px" width="40" height="12" viewBox="0 0 40 12"><circle cx="4.500" cy="6" r="3.700" fill="#2577ef"/><path d="M1 6h7M4.500 2v8" stroke="#fff" stroke-width=".6"/><path d="M15 2.500h2l1 1h2l1-1h2v8h-8z" fill="#1268e8"/><rect x="27" y="3" width="8" height="7" rx="1.800" fill="none" stroke="#1268e8" stroke-width="1.600"/></svg>
<div class="x" style="left:834px;top:436.500px;width:8px;height:1px;background:#bbb"></div>
<div class="t" style="left:854.500px;top:431.500px;font-size:7px;color:#666">33%</div>
<div class="t" style="left:880px;top:431px;font-size:11px;line-height:11px;color:#666">+</div>
<div class="x" style="left:992px;top:431px;width:39px;height:11px;background:#f6f6f6;border:1px solid #ddd;border-radius:2px;text-align:center;line-height:9.500px;color:#bbb">Debug</div>
<svg style="left:1037px;top:431px" width="11" height="11" viewBox="0 0 11 11" fill="none" stroke="#555"><circle cx="5.500" cy="5.500" r="3.500"/><path d="M5.500 0v2M5.500 9v2M0 5.500h2M9 5.500h2" stroke-width=".8"/></svg>
<div class="x" style="left:674px;top:445px;width:378px;height:16px;background:#ececec;border-bottom:1px solid #d8d8d8"></div>
<svg style="left:674px;top:447px" width="60" height="13" viewBox="0 0 60 13" fill="none" stroke="#aaa" stroke-width=".8"><path d="M17.500 3.500a3 3 0 1 0 2.500 2"/><path d="M29 6.500l4-3v6zM33 6.500l4-3v6zM38 3v7" stroke="#888"/><path d="M47 3v7M48 3.500l4 3-4 3zM52 3.500l4 3-4 3z"/></svg>
<div class="x" style="left:738px;top:452.500px;width:294px;height:1px;background:#ddd"></div>
<div class="x" style="left:1037px;top:448px;width:9px;height:9px;border-radius:50%;background:#fff;border:1px solid #ccc"></div>

<!-- console -->
<div class="x" style="left:681px;top:461px;width:361px;height:139px;background:#26262b;overflow:hidden;border:1px solid #888"></div>
<div class="x" style="left:681px;top:461px;width:361px;height:30px;overflow:hidden">
<div class="con" style="left:1px;top:1px">2020-08-03 22:04:22.715502+0900 DeferredLighting[38541:5508538] Metal GPU Frame Capture Enabled</div>
<div class="con" style="left:1px;top:9px">2020-08-03 22:04:22.715912+0900 DeferredLighting[38541:5508538] Metal API Validation Enabled</div>
<div class="con" style="left:1px;top:17px">2020-08-03 22:04:22.739801+0900 DeferredLighting[38541:5508538] Selected Device: Apple A9 GPU</div>
</div>
<div class="x" style="left:681px;top:600px;width:370px;height:9px;background:#fbfbfb"></div>
<div class="x" style="left:683px;top:603px;width:270px;height:4px;background:#b8b8b8;border-radius:2px"></div>
<div class="x" style="left:1042px;top:461px;width:9px;height:148px;background:#fbfbfb"></div>
<div class="x" style="left:681px;top:609px;width:370px;height:16px;background:#29292c"></div>
<div class="t" style="left:687px;top:611.500px;color:#ccc">All Output ≎</div>
<div class="x" style="left:907px;top:611px;width:97px;height:12px;background:#333336;border:1px solid #444;border-radius:1px"></div>
<div class="x" style="left:910px;top:613.500px;width:7px;height:7px;border:1px solid #888;border-radius:50%"></div>
<div class="t" style="left:920px;top:611.500px;color:#666">Filter</div>
<svg style="left:1012px;top:611px" width="40" height="12" viewBox="0 0 40 12"><path d="M2.500 3h6v8h-6zM1.500 2h8" stroke="#888" fill="#666"/><path d="M12.500 1v10" stroke="#555" stroke-width=".7"/><rect x="16.500" y="2" width="7.500" height="8" fill="none" stroke="#1a73f0"/><rect x="28" y="2" width="7.500" height="8" fill="none" stroke="#1a73f0"/><path d="M19 2v8M33 2v8" stroke="#1a73f0"/></svg>

<!-- inspector -->
<div class="x" style="left:1051px;top:22px;width:1px;height:603px;background:#b5b5b5"></div>
<div class="x" style="left:1052px;top:22px;width:148px;height:603px;background:#ececec"></div>
<div class="x" style="left:1052px;top:37px;width:148px;height:1px;background:#dcdcdc"></div>
<svg style="left:1103px;top:25px" width="50" height="11" viewBox="0 0 50 11" fill="none"><path d="M1.500 1h4.500l2 2v7h-6.500z" fill="#fff" stroke="#1a73f0" stroke-width="1.200"/><circle cx="21" cy="5.500" r="3.300" stroke="#888" stroke-width=".8"/><path d="M21 3.500v2l-1 1" stroke="#888" stroke-width=".6"/><circle cx="38" cy="5.500" r="3.300" stroke="#888" stroke-width=".8"/><path d="M37 4.500c0-1 2-1 2 0s-1 .800-1 1.700" stroke="#888" stroke-width=".6"/></svg>
<div class="t" style="left:1099px;top:326px;font-size:8.500px;color:#777">No Selection</div>

</div></body></html>
